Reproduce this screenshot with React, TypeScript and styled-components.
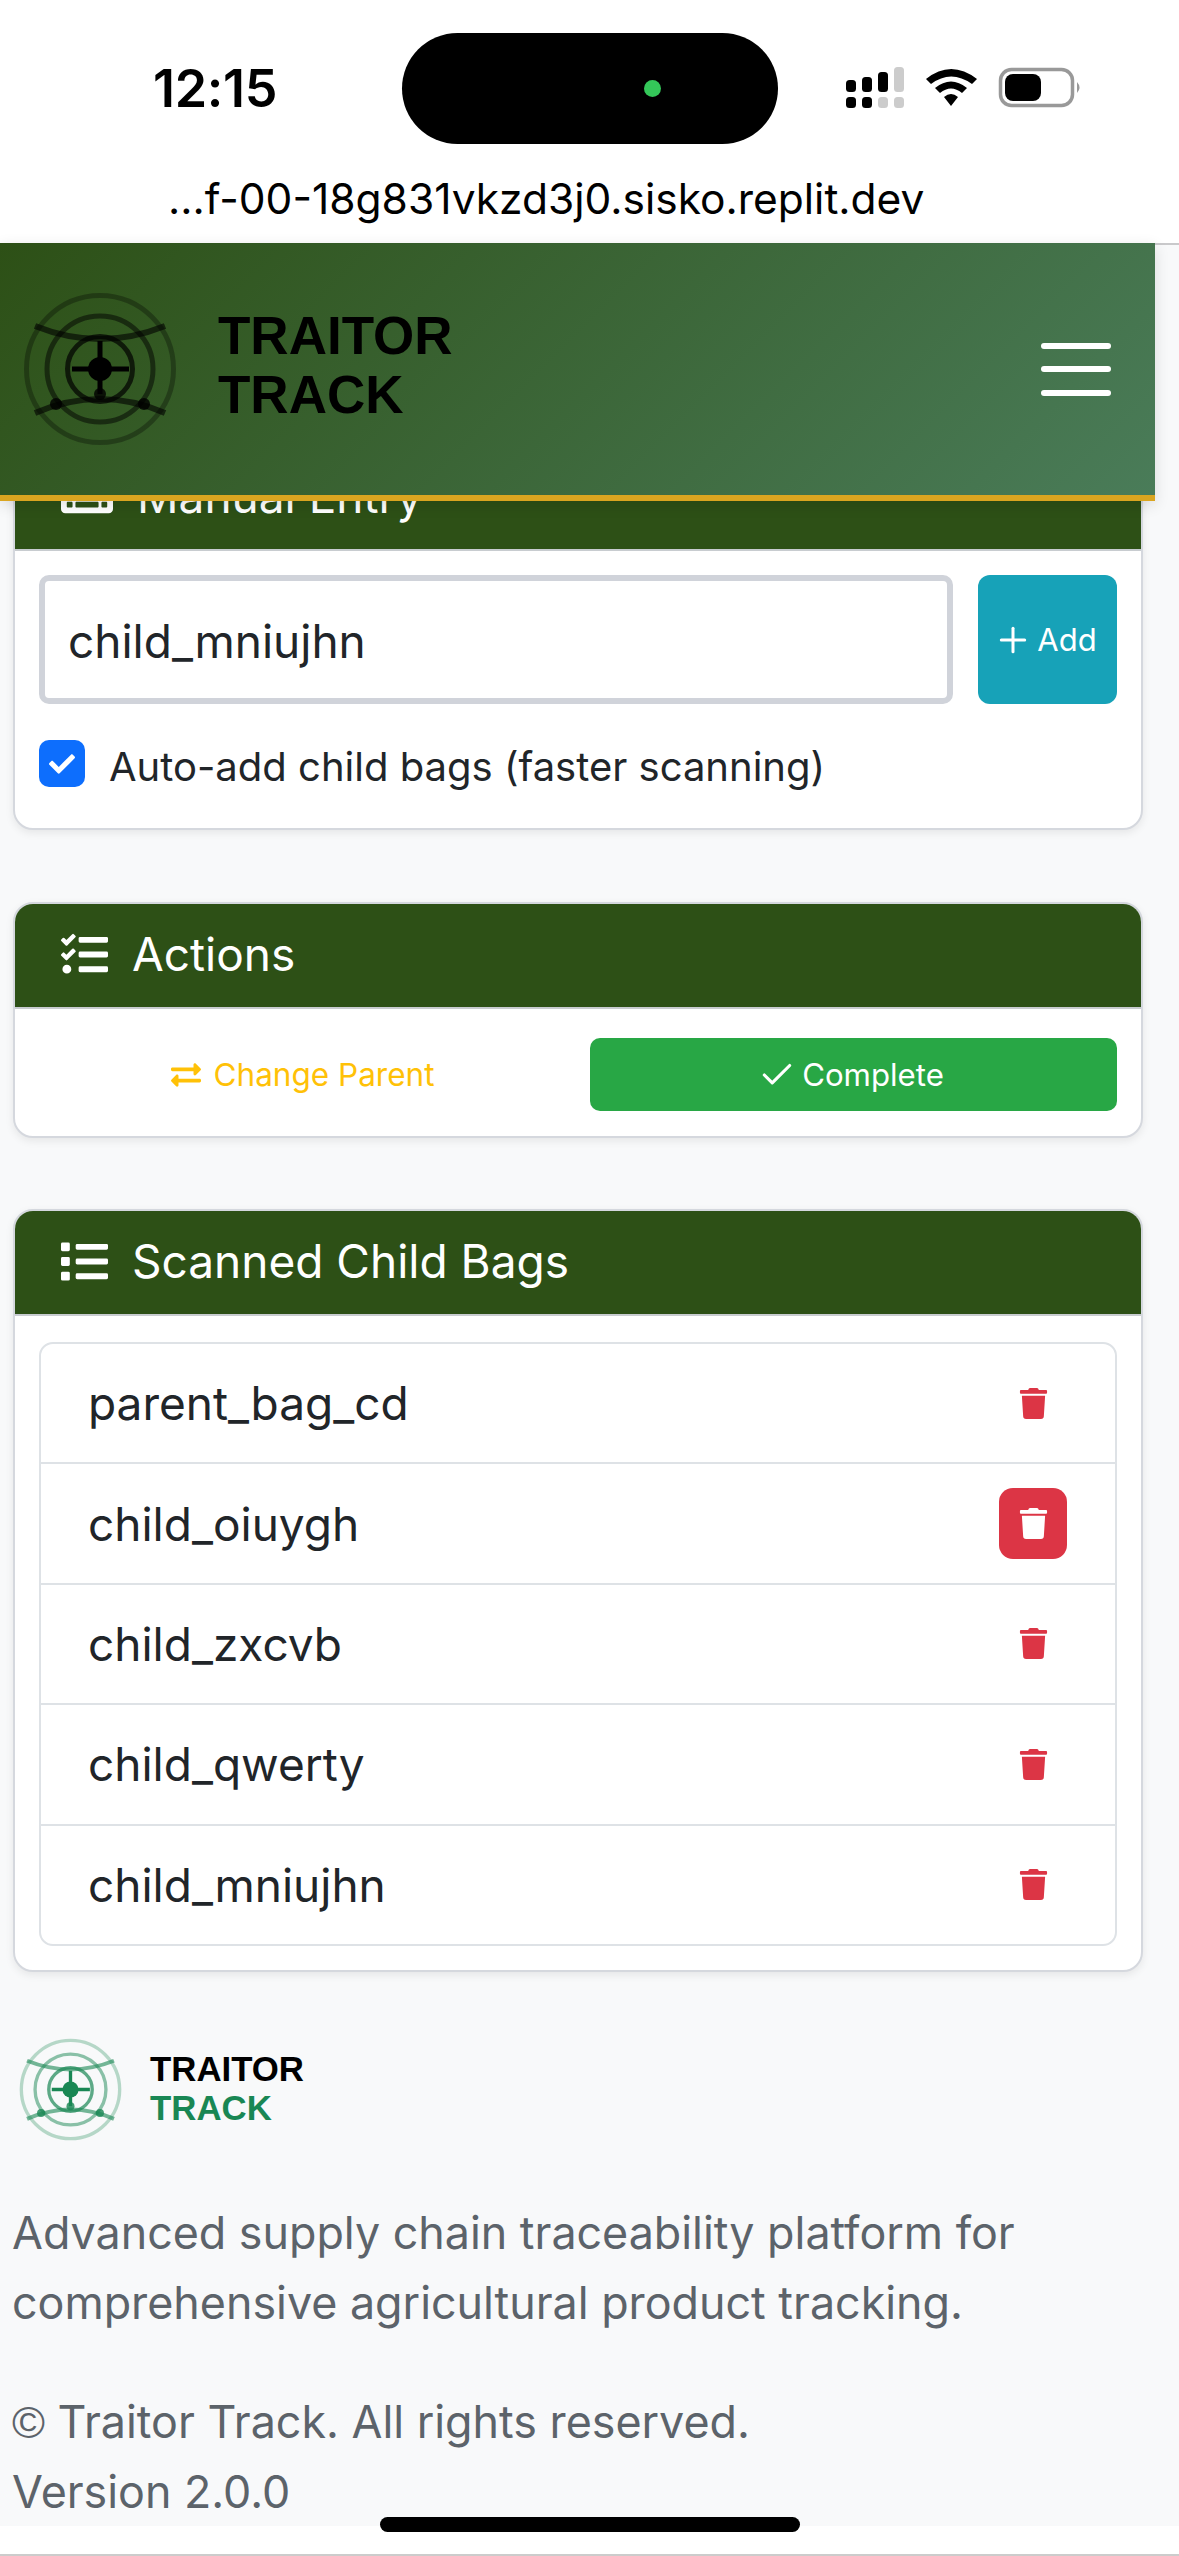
import React from "react";
import styled, { createGlobalStyle } from "styled-components";
import { FaKeyboard, FaTasks, FaList, FaExchangeAlt, FaCheck, FaTrash } from "react-icons/fa";
import { Plus, Check } from "lucide-react";

const Global = createGlobalStyle`
  html, body { margin: 0; padding: 0; background: #fff; }
  body { width: 1179px; height: 2556px; overflow: hidden; font-family: Inter, "Liberation Sans", sans-serif; }
`;
const Phone = styled.div`width: 1179px; height: 2556px; position: relative; overflow: hidden; background: #fff; display: flex; flex-direction: column;`;
const StatusBar = styled.div`height: 243px; flex: none; background: #fff; box-sizing: border-box; padding-top: 33px;`;
const StatusRow = styled.div`display: flex; align-items: center; padding-left: 153px;`;
const Time = styled.div`width: 249px; font-size: 52px; font-weight: 600; line-height: 60px; color: #000; letter-spacing: -0.3px;`;
const Island = styled.div`width: 376px; height: 111px; border-radius: 56px; background: #000; display: flex; align-items: center; justify-content: flex-end; padding-right: 117px; box-sizing: border-box;`;
const Dot = styled.div`width: 17px; height: 17px; border-radius: 50%; background: #34c759;`;
const Indicators = styled.svg`margin-left: 62px; align-self: flex-start; margin-top: 27px;`;
const Url = styled.div`margin: 29px 0 0 168px; font-size: 42.5px; line-height: 52px; color: #000; white-space: nowrap;`;
const Header = styled.header`
  position: absolute; left: 0; top: 243px; width: 1155px; height: 258px; box-sizing: border-box;
  border-bottom: 6px solid #daa520; display: flex; align-items: center; justify-content: space-between;
  background: linear-gradient(135deg, #2d5016 0%, #4a7c59 100%); padding: 0 44px 0 20px; z-index: 5;
  box-shadow: 0 4px 14px rgba(0,0,0,.12);
`;
const Brand = styled.div`display: flex; align-items: center; gap: 38px;`;
const BrandText = styled.div`font-family: "Liberation Sans", Arial, sans-serif; font-weight: 700; font-size: 53px; line-height: 59px; color: #000; margin-top: -8px;`;
const Burger = styled.div`display: flex; flex-direction: column; gap: 17.5px; width: 70px;`;
const BurgerBar = styled.div`height: 6px; border-radius: 3px; background: #fff;`;

const Page = styled.main`flex: none; background: #f8f9fa; height: 2283px; border-top: 2px solid #c9c9cb; padding: 0 36px 0 13px; box-sizing: border-box; display: flex; flex-direction: column;`;
const Card = styled.section<{ $mt: number }>`
  flex: none; background: #fff; border: 2px solid #d5d8de; border-radius: 20px; margin-top: ${p => p.$mt}px; box-shadow: 0 3px 8px rgba(0,0,0,.08); overflow: hidden;
`;
const CardHead = styled.div`
  height: 103px; box-sizing: border-box; padding: 0 0 3px 46px; background: #2d5016; color: #fff; display: flex; align-items: center; gap: 24px; font-size: 46px;
  border-bottom: 0; box-shadow: none;
`;
const HeadRule = styled.div`height: 2px; background: #c8ccd0;`;
const CardBody = styled.div`padding: 24px 24px 41px;`;
const InputRow = styled.div`display: flex; gap: 25px; height: 129px;`;
const InputBox = styled.div`flex: 1; border: 6px solid #d0d3da; border-radius: 10px; box-sizing: border-box; display: flex; align-items: center; padding: 2px 0 0 23px; font-size: 46px; color: #212529;`;
const AddButton = styled.div`width: 139px; box-sizing: border-box; padding-right: 5px; border-radius: 12px; background: #17a2b8; color: #fff; font-size: 31px; display: flex; align-items: center; justify-content: center; gap: 4px;`;
const CheckRow = styled.div`display: flex; align-items: center; gap: 25px; margin-top: 36px; height: 47px; font-size: 40px; color: #212529;`;
const CheckLabel = styled.span`padding-top: 5px; margin-left: -1px;`;
const CheckBox = styled.div`width: 46px; height: 47px; border-radius: 10px; background: #0d6efd; color: #fff; display: flex; align-items: center; justify-content: center; font-size: 26px;`;
const ActionRow = styled.div`display: grid; grid-template-columns: 1fr 1fr; gap: 24px; padding: 29px 24px 25px;`;
const ChangeBtn = styled.div`height: 73px; display: flex; align-items: center; justify-content: center; gap: 13px; color: #ffc107; font-size: 31.5px;`;
const CompleteBtn = styled.div`height: 73px; box-sizing: border-box; padding-right: 5px; border-radius: 10px; background: #28a745; color: #fff; display: flex; align-items: center; justify-content: center; gap: 6px; font-size: 31.2px;`;
const List = styled.div`margin: 26px 24px 24px; border: 2px solid #dee2e6; border-radius: 14px; overflow: hidden;`;
const Row = styled.div`height: 118.4px; border-bottom: 2px solid #dee2e6; display: flex; align-items: center; justify-content: space-between; padding: 0 48px 0 47px; font-size: 46px; color: #212529; &:last-child { border-bottom: 0; }`;
const Del = styled.div<{ $active?: boolean }>`width: 68px; height: 71px; border-radius: 14px; display: flex; align-items: center; justify-content: center; font-size: 31px; color: ${p => p.$active ? "#fff" : "#dc3545"}; background: ${p => p.$active ? "#dc3545" : "transparent"};`;
const Footer = styled.footer`padding-top: 64px; color: #5c636a;`;
const FootBrand = styled.div`display: flex; align-items: center; gap: 26px; margin-left: 4px;`;
const FootName = styled.div`font-family: "Liberation Sans", Arial, sans-serif; font-weight: 700; font-size: 34.8px; line-height: 39.5px; color: #000; margin-top: -2px;`;
const FootTrack = styled.div`color: #198754;`;
const FootText = styled.p<{ $mt: number }>`margin: ${p => p.$mt}px 0 0 -1px; font-size: 44.8px; line-height: 70px; white-space: nowrap;`;
const Copy = styled.span`font-family: "Liberation Sans", sans-serif;`;
const HomeBar = styled.div`position: absolute; left: 380px; top: 2517px; width: 420px; height: 15px; border-radius: 8px; background: #000; z-index: 6;`;
const BottomStrip = styled.div`flex: none; height: 30px; background: #fff; border-bottom: 2px solid #ccc; box-sizing: border-box;`;

const Logo = ({ size, color }: { size: number; color: string }) => (
  <svg width={size} height={size} viewBox="0 0 160 160" fill="none" stroke={color}>
    <circle cx="80" cy="80" r="73.5" strokeWidth="5" opacity=".3" />
    <circle cx="80" cy="80" r="53" strokeWidth="5" opacity=".5" />
    <circle cx="80" cy="80" r="32.5" strokeWidth="5" opacity=".7" />
    <path d="M15 37 Q80 63 145 37" strokeWidth="6" opacity=".6" />
    <path d="M15 124 Q80 96 145 124" strokeWidth="6" opacity=".6" />
    <path d="M80 52V105M52 80H109" strokeWidth="5" />
    <circle cx="80" cy="80" r="12" fill={color} stroke="none" />
    <circle cx="80" cy="105" r="6" fill={color} stroke="none" opacity=".8" />
    <circle cx="36" cy="115" r="6" fill={color} stroke="none" opacity=".8" />
    <circle cx="124" cy="115" r="6" fill={color} stroke="none" opacity=".8" />
  </svg>
);

const rows = ["parent_bag_cd", "child_oiuygh", "child_zxcvb", "child_qwerty", "child_mniujhn"];

export default function App() {
  return (
    <Phone>
      <Global />
      <StatusBar>
        <StatusRow>
          <Time>12:15</Time>
          <Island><Dot /></Island>
          <Indicators width="250" height="50" viewBox="0 0 250 50">
            <rect x="6" y="20" width="10" height="12" rx="3.5" fill="#000" />
            <rect x="22" y="17" width="10" height="15" rx="3.5" fill="#000" />
            <rect x="38" y="12" width="10" height="20" rx="3.5" fill="#000" />
            <rect x="54" y="7" width="10" height="25" rx="3.5" fill="#ccc" />
            <rect x="6" y="37" width="10" height="11" rx="3.5" fill="#000" />
            <rect x="22" y="37" width="10" height="11" rx="3.5" fill="#000" />
            <rect x="38" y="37" width="10" height="11" rx="3.5" fill="#ccc" />
            <rect x="54" y="37" width="10" height="11" rx="3.5" fill="#ccc" />
            <path d="M86 19 Q111 -1 137 19 L132 24 Q111 9 91 24Z M95 28 Q111 15 127 28 L122 33 Q111 24 100 33Z M104 37 Q111 31 118 37 L111 46Z" fill="#000" />
            <rect x="160.5" y="9.5" width="72" height="36" rx="11" fill="none" stroke="#999" strokeWidth="3.5" />
            <rect x="165" y="14" width="36" height="27" rx="8" fill="#000" />
            <path d="M237 22 Q242 27.5 237 33Z" fill="#999" />
          </Indicators>
        </StatusRow>
        <Url>...f-00-18g831vkzd3j0.sisko.replit.dev</Url>
      </StatusBar>
      <Header>
        <Brand>
          <Logo size={160} color="#000" />
          <BrandText>TRAITOR<br />TRACK</BrandText>
        </Brand>
        <Burger><BurgerBar /><BurgerBar /><BurgerBar /></Burger>
      </Header>
      <Page>
        <Card $mt={199}>
          <CardHead><FaKeyboard size={52} />Manual Entry</CardHead>
          <HeadRule />
          <CardBody>
            <InputRow>
              <InputBox>child_mniujhn</InputBox>
              <AddButton><Plus size={40} strokeWidth={1.8} />Add</AddButton>
            </InputRow>
            <CheckRow><CheckBox><FaCheck /></CheckBox><CheckLabel>Auto-add child bags (faster scanning)</CheckLabel></CheckRow>
          </CardBody>
        </Card>
        <Card $mt={72}>
          <CardHead><FaTasks size={47} />Actions</CardHead>
          <HeadRule />
          <ActionRow>
            <ChangeBtn><FaExchangeAlt size={30} />Change Parent</ChangeBtn>
            <CompleteBtn><Check size={38} strokeWidth={2} />Complete</CompleteBtn>
          </ActionRow>
        </Card>
        <Card $mt={71}>
          <CardHead><FaList size={47} />Scanned Child Bags</CardHead>
          <HeadRule />
          <List>
            {rows.map((r, i) => (
              <Row key={r}>{r}<Del $active={i === 1}><FaTrash /></Del></Row>
            ))}
          </List>
        </Card>
        <Footer>
          <FootBrand>
            <Logo size={107} color="#198754" />
            <FootName>TRAITOR<FootTrack>TRACK</FootTrack></FootName>
          </FootBrand>
          <FootText $mt={55}>Advanced supply chain traceability platform for<br />comprehensive agricultural product tracking.</FootText>
          <FootText $mt={49}><Copy>©</Copy> Traitor Track. All rights reserved.<br />Version 2.0.0</FootText>
        </Footer>
      </Page>
      <BottomStrip />
      <HomeBar />
    </Phone>
  );
}
